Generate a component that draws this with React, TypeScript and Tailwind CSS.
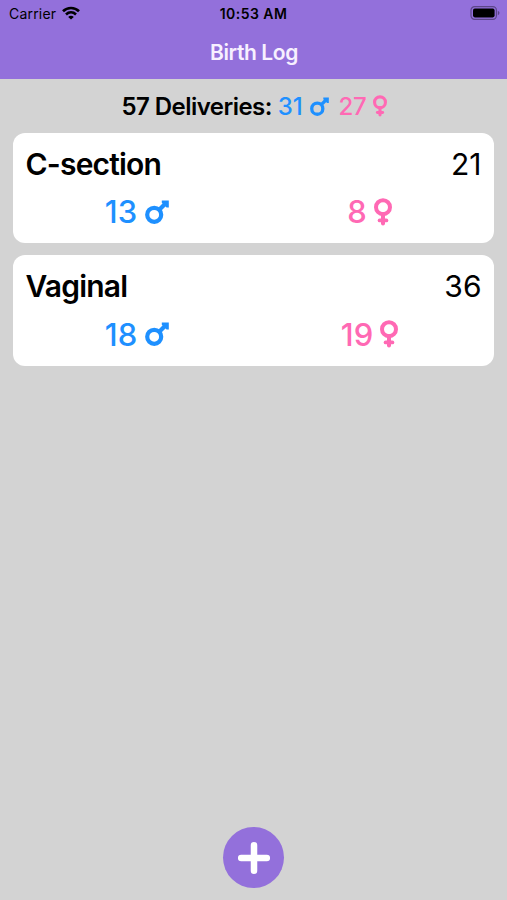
import React from 'react';

interface Delivery {
  label: string;
  total: number;
  boys: number;
  girls: number;
}

const deliveries: Delivery[] = [
  { label: 'C-section', total: 21, boys: 13, girls: 8 },
  { label: 'Vaginal', total: 36, boys: 18, girls: 19 },
];

const MaleIcon: React.FC<{ className?: string }> = ({ className }) => (
  <svg viewBox="0 0 24 24" className={className} fill="none" stroke="currentColor" strokeWidth="4.2">
    <circle cx="9.2" cy="14.8" r="7" />
    <path d="M14 10 20.5 3.5" strokeWidth="4.2" />
    <path d="M16.8 0.6H23.8V7.6L21.6 7.6 16.8 2.8Z" fill="currentColor" stroke="none" />
  </svg>
);

const FemaleIcon: React.FC<{ className?: string }> = ({ className }) => (
  <svg viewBox="0 0 18 28" className={className} fill="none" stroke="currentColor" strokeWidth="4">
    <circle cx="9" cy="9.2" r="7" />
    <path d="M9 16V25.4" strokeLinecap="round" />
    <path d="M5.6 22.4H12.4" strokeLinecap="round" strokeWidth="3.8" />
  </svg>
);

const StatusBar: React.FC = () => (
  <div className="grid h-[27px] grid-cols-3 items-center pl-[9px] pr-[7px] text-black">
    <div className="flex items-center gap-[6px]">
      <span className="text-[14px] tracking-[0.2px]">Carrier</span>
      <svg viewBox="0 0 18 14" className="mb-[2px] h-[14px] w-[18px]" fill="none" stroke="currentColor" strokeWidth="2.7">
        <path d="M1 5.2C5.5 0.9 12.5 0.9 17 5.2" />
        <path d="M4 8.4C6.9 5.8 11.1 5.8 14 8.4" />
        <path d="M9 13.6 6.2 10.9C7.8 9.5 10.2 9.5 11.8 10.9Z" fill="currentColor" stroke="none" />
      </svg>
    </div>
    <span className="whitespace-nowrap pr-[2px] text-center text-[14px] font-semibold tracking-[0.45px]">10:53 AM</span>
    <svg viewBox="0 0 30 14" className="mb-px h-[14px] w-[30px] justify-self-end">
      <rect x="1" y="0.7" width="25.4" height="12.6" rx="3.6" fill="none" stroke="#5c4689" strokeWidth="1.2" />
      <rect x="3" y="2.6" width="21.6" height="8.8" rx="1.8" fill="#000" />
      <path d="M27.8 4.8C30 5.6 30 8.4 27.8 9.2Z" fill="#5c4689" />
    </svg>
  </div>
);

const DeliveryCard: React.FC<{ delivery: Delivery }> = ({ delivery }) => (
  <div className="h-[110.4px] rounded-xl bg-white px-[12.5px] pt-2">
    <div className="flex h-[46px] items-center justify-between text-[30px] text-black">
      <h2 className="font-semibold tracking-[-0.8px]">{delivery.label}</h2>
      <span>{delivery.total}</span>
    </div>
    <div className="grid h-[51px] grid-cols-2 text-[31px] font-medium">
      <div className="flex items-center justify-center gap-2 pr-[5px] text-[#1e90ff]">
        <span>{delivery.boys}</span>
        <MaleIcon className="mb-px h-6 w-6" />
      </div>
      <div className="flex items-center justify-center gap-[7px] pl-[4px] text-[#ff69b4]">
        <span>{delivery.girls}</span>
        <FemaleIcon className="mb-px h-7 w-[18px]" />
      </div>
    </div>
  </div>
);

export default function App() {
  const boys = 31;
  const girls = 27;

  return (
    <div className="flex h-screen flex-col bg-[#d3d3d3] font-['Inter',sans-serif]">
      <header className="h-[79px] bg-[#9370db]">
        <StatusBar />
        <h1 className="flex h-[51px] items-center justify-center pl-px text-[21px] font-semibold tracking-[-0.4px] text-[#f7f0ff]">
          Birth Log
        </h1>
      </header>

      <main className="flex flex-1 flex-col px-[13px]">
        <div className="flex h-[54px] items-center justify-center pl-[2px] pt-px text-[24px] font-semibold text-black">
          <span className="tracking-[-0.55px]">57 Deliveries:</span>
          <span className="ml-[6px] font-medium tracking-[-0.1px] text-[#1e90ff]">{boys}</span>
          <MaleIcon className="mb-px ml-[7px] h-[19px] w-[19px] text-[#1e90ff]" />
          <span className="ml-[10px] font-medium tracking-[-0.3px] text-[#ff69b4]">{girls}</span>
          <FemaleIcon className="mb-px ml-[7px] h-[22px] w-[14px] text-[#ff69b4]" />
        </div>

        <div className="flex flex-col gap-3">
          {deliveries.map((delivery) => (
            <DeliveryCard key={delivery.label} delivery={delivery} />
          ))}
        </div>
      </main>

      <footer className="flex justify-center pb-3">
        <button aria-label="Add delivery" className="flex h-[61px] w-[61px] items-center justify-center rounded-full bg-[#9370db]">
          <svg viewBox="0 0 34 34" className="h-[34px] w-[34px]" stroke="#fff" strokeWidth="6.5" strokeLinecap="round">
            <path d="M17 4.2V29.8M4.2 17H29.8" />
          </svg>
        </button>
      </footer>
    </div>
  );
}
